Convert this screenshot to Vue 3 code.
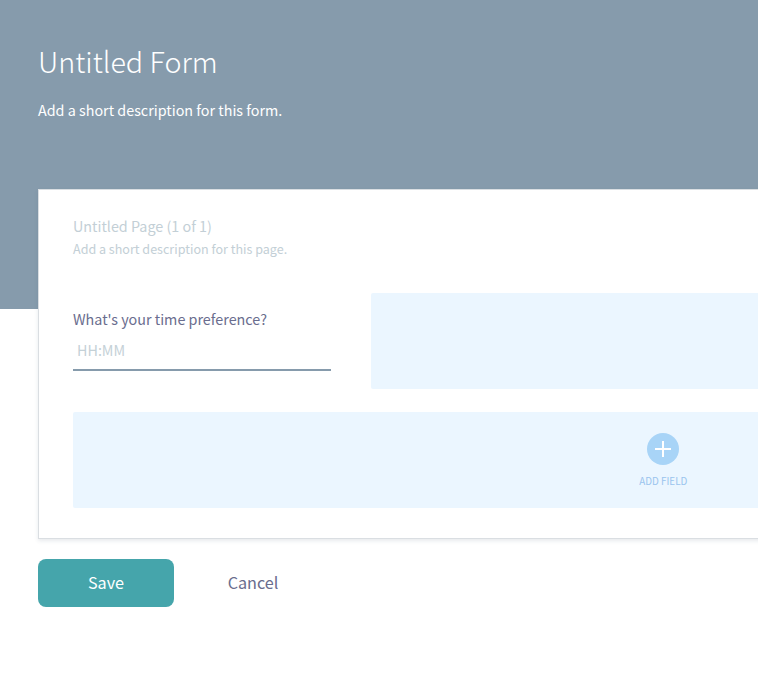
<script setup>
import { ref } from 'vue'

const time = ref('')
</script>

<template>
  <main class="page">
    <header class="hero">
      <h1 class="title">Untitled Form</h1>
      <p class="description">Add a short description for this form.</p>
    </header>

    <section class="card">
      <h2 class="page-title">Untitled Page (1 of 1)</h2>
      <p class="page-description">Add a short description for this page.</p>
      <div class="row">
        <label class="field">
          <span class="label">What's your time preference?</span>
          <input v-model="time" class="input" type="text" placeholder="HH:MM" />
        </label>
        <div class="slot"></div>
      </div>
      <button class="add" type="button">
        <svg class="plus" viewBox="0 0 32 32" width="32" height="32">
          <circle cx="16" cy="16" r="16" fill="#a8d4f7" />
          <path d="M8 16H24M16 8V24" stroke="#fff" stroke-width="2" />
        </svg>
        <span class="add-text">ADD FIELD</span>
      </button>
    </section>

    <footer class="actions">
      <button class="save" type="button">Save</button>
      <button class="cancel" type="button">Cancel</button>
    </footer>
  </main>
</template>

<style>
body {
  background: #fff;
}
</style>

<style scoped>
* {
  box-sizing: border-box;
}
.page {
  height: 677px;
  overflow: hidden;
  padding: 0 0 0 38px;
  font-family: "Noto Sans CJK SC", "Noto Sans", sans-serif;
  color: #6a6d8e;
  background: linear-gradient(#869bac 309px, #fff 309px);
}
.page h1,
.page h2,
.page p {
  margin: 0;
}
.page button {
  border: 0;
  padding: 0;
  font-family: inherit;
}
.hero {
  height: 189px;
  padding-top: 41px;
  color: #fff;
}
.title {
  font-size: 28.7px;
  font-weight: 200;
  line-height: 40px;
}
.page .description {
  margin-top: 19px;
  font-size: 14.35px;
  line-height: 20px;
}
.card {
  width: 1250px;
  height: 350px;
  padding: 25px 34px 0;
  border: 1px solid #dadee2;
  background: #fff;
  box-shadow: 0 2px 4px rgba(60, 80, 110, 0.12);
}
.page-title {
  font-size: 14.35px;
  font-weight: 400;
  line-height: 22px;
  color: #c3cfd6;
}
.page .page-description {
  margin-top: 1px;
  font-size: 12.55px;
  line-height: 22px;
  color: #c3cfd6;
}
.row {
  display: flex;
  gap: 40px;
  height: 96px;
  margin-top: 33px;
}
.field {
  display: flex;
  flex-direction: column;
  width: 258px;
  padding-top: 16px;
}
.label {
  font-size: 14.35px;
  line-height: 20px;
}
.input {
  width: 258px;
  height: 38px;
  margin-top: 4px;
  padding: 0 4px 3px;
  border: 0;
  border-bottom: 2px solid #869bac;
  outline: 0;
  font-family: inherit;
  font-size: 14.35px;
  background: transparent;
}
.input::placeholder {
  color: #c5d1d7;
  opacity: 1;
}
.slot {
  flex: 1;
  border-radius: 2px;
  background: #ebf6ff;
}
.add {
  display: flex;
  flex-direction: column;
  align-items: center;
  justify-content: flex-start;
  width: 100%;
  height: 96px;
  margin-top: 23px;
  border-radius: 2px;
  background: #ebf6ff;
}
.page .add {
  padding-top: 21px;
}
.plus {
  display: block;
}
.add-text {
  margin-top: 7px;
  font-size: 10.8px;
  line-height: 16px;
  transform: scaleX(0.91);
  color: #9ac4ee;
}
.actions {
  display: flex;
  padding-top: 20px;
}
.save,
.cancel {
  height: 48px;
  font-size: 16.2px;
  line-height: 46px;
}
.page .actions button {
  padding-bottom: 2px;
}
.save {
  width: 136px;
  border-radius: 8px;
  color: #fff;
  background: #45a5ab;
}
.cancel {
  width: 158px;
  color: #6a6d8e;
  background: transparent;
}
</style>
